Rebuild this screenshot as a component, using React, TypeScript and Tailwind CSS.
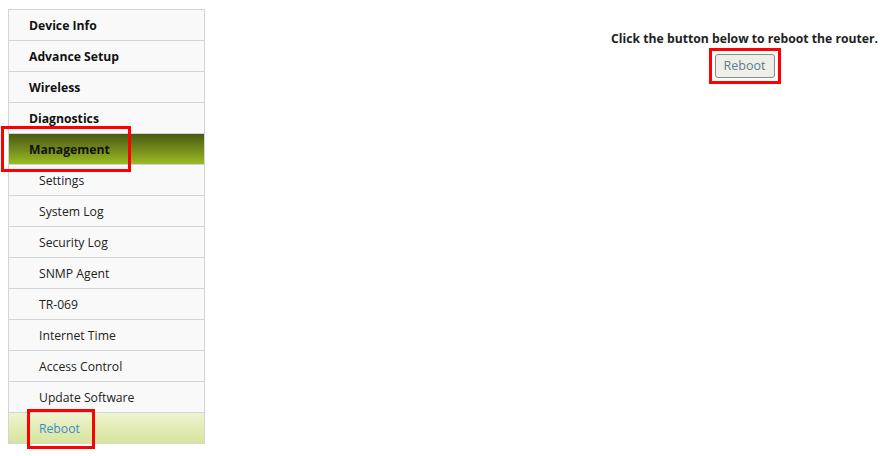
const menu = [
  { label: 'Device Info', level: 0 },
  { label: 'Advance Setup', level: 0 },
  { label: 'Wireless', level: 0 },
  { label: 'Diagnostics', level: 0 },
  { label: 'Management', level: 0, active: true },
  { label: 'Settings', level: 1 },
  { label: 'System Log', level: 1 },
  { label: 'Security Log', level: 1 },
  { label: 'SNMP Agent', level: 1 },
  { label: 'TR-069', level: 1 },
  { label: 'Internet Time', level: 1 },
  { label: 'Access Control', level: 1 },
  { label: 'Update Software', level: 1 },
  { label: 'Reboot', level: 1, current: true },
]

export default function App() {
  return (
    <div className="w-[894px] h-[456px] bg-white flex text-[12.2px] text-[#111] font-['Open_Sans','Noto_Sans',sans-serif]">
      {/* Sidebar */}
      <div className="pl-2 pt-[9px]">
        <ul className="w-[197px] border border-[#d4d4d4] border-b-0">
          {menu.map((item) => (
            <li
              key={item.label}
              className={
                'relative h-[31px] flex items-center pt-[2px] border-b border-[#d4d4d4] ' +
                (item.active
                  ? 'bg-gradient-to-b from-[#4b5a12] to-[#9cbb22]'
                  : item.current
                    ? 'bg-gradient-to-b from-[#eef4d0] to-[#d7e49c]'
                    : 'bg-[#f9f9f9]')
              }
            >
              <span
                className={
                  item.level === 0
                    ? 'pl-5 font-bold text-[#111]'
                    : item.current
                      ? 'pl-[30px] text-[#3a8dc9]'
                      : 'pl-[30px] text-[#222]'
                }
              >
                {item.label}
              </span>
              {item.active && (
                <div className="absolute z-10 left-[-8px] top-[-8px] w-[130px] h-[46px] border-[3px] border-[#ff0000]" />
              )}
              {item.current && (
                <div className="absolute z-10 left-[18px] top-[-4px] w-[68px] h-[40px] border-[3px] border-[#ff0000]" />
              )}
            </li>
          ))}
        </ul>
      </div>

      {/* Content */}
      <div className="flex-1 flex justify-end pr-4 pt-[30px]">
        <div className="flex flex-col items-center">
          <p className="font-bold text-[#222]">Click the button below to reboot the router.</p>
          <div className="relative mt-[6px]">
            <button className="h-[24px] w-[60px] rounded-[3px] border border-[#8a8a8a] bg-[#efefe9] text-[#5b7c93] text-[12.5px]">
              Reboot
            </button>
            <div className="absolute left-[-6px] top-[-6px] right-[-6px] bottom-[-6px] border-[3px] border-[#ff0000]" />
          </div>
        </div>
      </div>
    </div>
  )
}
